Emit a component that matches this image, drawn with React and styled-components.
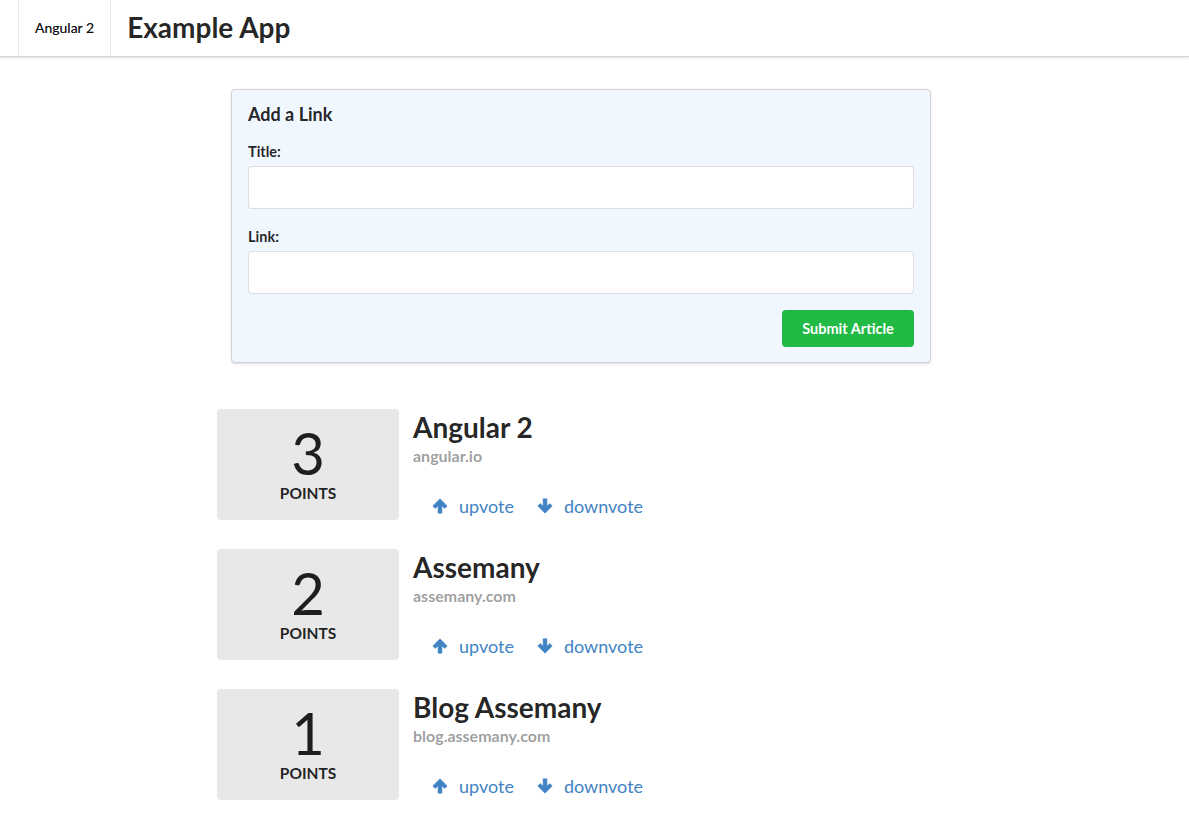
import React from "react";
import styled, { createGlobalStyle } from "styled-components";

const Global = createGlobalStyle`
  html, body { margin: 0; padding: 0; background: #fff; }
  body { font-family: Lato, "Helvetica Neue", Arial, sans-serif; color: rgba(0,0,0,0.87); font-size: 14px; }
  * { box-sizing: border-box; }
`;

const Menu = styled.div`
  display: flex;
  align-items: stretch;
  height: 57px;
  border-bottom: 1px solid #d4d4d5;
  box-shadow: 0 1px 2px 0 rgba(34,36,38,0.15);
  padding-left: 18px;
`;

const MenuItem = styled.div`
  display: flex;
  align-items: center;
  padding: 0 ${p => p.$pad || 16}px ${p => p.$lift || 0}px;
  border-left: ${p => (p.$first ? "1px solid rgba(34,36,38,0.1)" : "none")};
  border-right: ${p => (p.$divider ? "1px solid rgba(34,36,38,0.1)" : "none")};
  font-size: ${p => p.$size || 14}px;
  font-weight: ${p => p.$weight || 400};
  color: rgba(0,0,0,0.87);
  text-shadow: ${p => (p.$first ? "0 0 0.4px rgba(0,0,0,0.6)" : "none")};
`;

const Main = styled.div`
  display: flex;
  flex-direction: column;
  align-items: flex-start;
  padding-left: 217px;
  padding-top: 32px;
`;

const FormSegment = styled.form`
  margin-left: 14px;
  width: 700px;
  background: #f0f7fe;
  border: 1px solid #d4d4d5;
  border-radius: 4px;
  box-shadow: 0 1px 2px 0 rgba(34,36,38,0.15);
  padding: 13px 16px 15px;
  display: flex;
  flex-direction: column;
`;

const FormHeader = styled.h3`
  margin: 0 0 19px;
  font-size: 18px;
  font-weight: 700;
  line-height: 22px;
`;

const Field = styled.div`
  display: flex;
  flex-direction: column;
  margin-bottom: ${p => p.$mb || 20}px;
`;

const Label = styled.label`
  font-size: 14.5px;
  font-weight: 700;
  line-height: 16px;
  margin-bottom: 6px;
`;

const Input = styled.input`
  height: 43px;
  width: 100%;
  background: #fff;
  border: 1px solid rgba(34,36,38,0.15);
  border-radius: 4px;
  font-family: inherit;
  font-size: 14px;
  padding: 0 14px;
  outline: none;
`;

const ButtonRow = styled.div`
  display: flex;
  justify-content: flex-end;
  margin-top: -4px;
`;

const SubmitButton = styled.button`
  width: 132px;
  height: 37px;
  background: #21ba45;
  color: #fff;
  border: none;
  border-radius: 4px;
  font-family: Lato, sans-serif;
  font-size: 14.5px;
  font-weight: 700;
  cursor: pointer;
`;

const List = styled.div`
  margin-top: 46px;
  display: flex;
  flex-direction: column;
  gap: 29px;
`;

const Item = styled.div`
  display: flex;
  align-items: flex-start;
`;

const Points = styled.div`
  width: 182px;
  height: 111px;
  background: #e8e8e8;
  border-radius: 4px;
  display: flex;
  flex-direction: column;
  align-items: center;
  padding-top: 15px;
`;

const Num = styled.div`
  font-size: 58px;
  font-weight: 400;
  line-height: 58px;
  color: rgba(0,0,0,0.87);
`;

const PointsLabel = styled.div`
  font-size: 15.5px;
  font-weight: 700;
  line-height: 18px;
  margin-top: 2px;
`;

const Content = styled.div`
  margin-left: 14px;
  display: flex;
  flex-direction: column;
`;

const Title = styled.div`
  font-size: 28px;
  font-weight: 700;
  line-height: 34px;
  margin-top: 1px;
`;

const Meta = styled.div`
  font-size: 16px;
  font-weight: 700;
  color: rgba(0,0,0,0.4);
  line-height: 20px;
  margin-top: 2px;
`;

const Actions = styled.div`
  display: flex;
  gap: 23px;
  padding-left: 19px;
  margin-top: 29px;
`;

const VoteLink = styled.a`
  display: flex;
  align-items: center;
  gap: 11px;
  font-size: 18px;
  color: #4183c4;
  text-decoration: none;
  line-height: 22px;
  cursor: pointer;
`;

const Arrow = ({ down }) => (
  <svg width="16" height="16" viewBox="0 0 16 16" style={{ transform: down ? "rotate(180deg)" : "none" }}>
    <path d="M8 0.8 L15.2 8 L12.7 10.5 L9.9 7.7 L9.9 15.2 L6.1 15.2 L6.1 7.7 L3.3 10.5 L0.8 8 Z" fill="#4183c4" strokeLinejoin="round" stroke="#4183c4" strokeWidth="0.6" />
  </svg>
);

const articles = [
  { title: "Angular 2", link: "angular.io", votes: 3 },
  { title: "Assemany", link: "assemany.com", votes: 2 },
  { title: "Blog Assemany", link: "blog.assemany.com", votes: 1 },
];

export default function App() {
  return (
    <>
      <Global />
      <Menu>
        <MenuItem $first $divider $lift={1}>Angular 2</MenuItem>
        <MenuItem $size={28} $weight={700} $lift={3}>Example App</MenuItem>
      </Menu>
      <Main>
        <FormSegment onSubmit={e => e.preventDefault()}>
          <FormHeader>Add a Link</FormHeader>
          <Field>
            <Label>Title:</Label>
            <Input />
          </Field>
          <Field>
            <Label>Link:</Label>
            <Input />
          </Field>
          <ButtonRow>
            <SubmitButton type="submit">Submit Article</SubmitButton>
          </ButtonRow>
        </FormSegment>
        <List>
          {articles.map(a => (
            <Item key={a.title}>
              <Points>
                <Num>{a.votes}</Num>
                <PointsLabel>POINTS</PointsLabel>
              </Points>
              <Content>
                <Title>{a.title}</Title>
                <Meta>{a.link}</Meta>
                <Actions>
                  <VoteLink><Arrow />upvote</VoteLink>
                  <VoteLink><Arrow down />downvote</VoteLink>
                </Actions>
              </Content>
            </Item>
          ))}
        </List>
      </Main>
    </>
  );
}
